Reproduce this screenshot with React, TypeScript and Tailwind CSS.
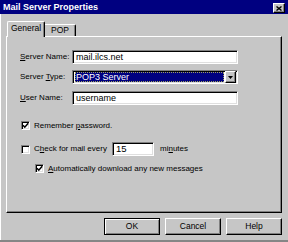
import React from "react";

const raised =
  "bg-[#c6c6c6] border-t border-l border-r border-b border-t-white border-l-white border-r-black border-b-black shadow-[inset_-1px_-1px_0_#808080]";
const sunken =
  "bg-white border-t border-l border-r border-b border-t-[#808080] border-l-[#808080] border-r-white border-b-white shadow-[inset_1px_1px_0_#000,inset_-1px_-1px_0_#dfdfdf]";

function Check({ checked }: { checked: boolean }) {
  return (
    <div className={`w-[9px] h-[9px] flex items-center justify-center shrink-0 ${sunken}`}>
      {checked && (
        <svg width="7" height="7" viewBox="0 0 7 7">
          <path d="M1 3.2 L2.8 5.2 L6.2 1.2" fill="none" stroke="#000" strokeWidth="1.5" />
        </svg>
      )}
    </div>
  );
}

function Field({ label, value }: { label: React.ReactNode; value: string }) {
  return (
    <div className="flex items-center h-[14px]">
      <span className="w-[52px]">{label}</span>
      <div className={`w-[166px] h-[14px] flex items-center pl-[3px] text-[9px] ${sunken}`}>{value}</div>
    </div>
  );
}

function Button({ label, isDefault }: { label: string; isDefault?: boolean }) {
  return (
    <button
      className={
        isDefault
          ? "w-[56px] h-[17px] bg-[#c6c6c6] border border-black shadow-[inset_1px_1px_0_#fff,inset_-1px_-1px_0_#808080] flex items-center justify-center text-[8.5px]"
          : `w-[56px] h-[17px] flex items-center justify-center text-[8.5px] ${raised}`
      }
    >
      {label}
    </button>
  );
}

export default function App() {
  return (
    <div className="w-[288px] h-[242px] bg-[#c6c6c6] flex flex-col text-[8px] leading-none text-black font-['Liberation_Sans',Arial,sans-serif] border-b-2 border-b-[#868686] overflow-hidden">
      <div className="h-[14px] bg-[#000080] flex items-center justify-between pl-[3px] pr-[3px] shrink-0">
        <span className="text-white font-bold text-[9px]">Mail Server Properties</span>
        <div className={`w-[12px] h-[10px] flex items-center justify-center mt-[2px] ${raised}`}>
          <svg width="6" height="5" viewBox="0 0 6 5">
            <path d="M0.5 0.5 L5.5 4.5 M5.5 0.5 L0.5 4.5" stroke="#000" strokeWidth="1.4" />
          </svg>
        </div>
      </div>

      <div className="flex-1 flex flex-col border-l border-l-white">
        <div className="flex items-end pl-[6px] pt-[7px] -mb-px relative z-10 text-[8.5px]">
          <div className="h-[16px] w-[38px] bg-[#c6c6c6] border-t border-l border-t-white border-l-white border-r border-r-black shadow-[inset_-1px_0_0_#808080] rounded-t-[2px] flex items-center justify-center pb-[2px]">
            General
          </div>
          <div className="h-[12px] w-[31px] mb-px bg-[#c6c6c6] border-t border-t-white border-r border-r-black shadow-[inset_-1px_0_0_#808080] rounded-tr-[2px] flex items-center justify-center">
            POP
          </div>
        </div>

        <div className="ml-[5px] w-[276px] h-[177px] border-t border-l border-t-white border-l-white border-r border-b border-r-black border-b-black shadow-[inset_-1px_-1px_0_#808080] flex flex-col pt-[13px] pl-[13px]">
          <Field label={<><u>S</u>erver Name:</>} value="mail.ilcs.net" />

          <div className="flex items-center h-[14px] mt-[6px]">
            <span className="w-[52px]">Server <u>T</u>ype:</span>
            <div className={`w-[166px] h-[14px] flex items-center pl-[2px] pr-px ${sunken}`}>
              <div className="flex-1 h-[10px] bg-[#000080] text-white text-[9px] flex items-center pl-px mr-px outline outline-1 outline-dotted outline-[#a0a060] -outline-offset-1">
                POP3 Server
              </div>
              <div className={`w-[11px] h-[12px] flex items-center justify-center ${raised}`}>
                <svg width="5" height="3" viewBox="0 0 5 3">
                  <path d="M0 0 H5 L2.5 3 Z" fill="#000" />
                </svg>
              </div>
            </div>
          </div>

          <div className="mt-[7px]">
            <Field label={<><u>U</u>ser Name:</>} value="username" />
          </div>

          <div className="flex items-center h-[9px] mt-[16px] pl-px">
            <Check checked />
            <span className="ml-[4px]">
              Remember <u>p</u>assword.
            </span>
          </div>

          <div className="flex items-center h-[14px] mt-[12px] pl-px">
            <Check checked={false} />
            <span className="ml-[4px] w-[78px]">
              C<u>h</u>eck for mail every
            </span>
            <div className={`w-[42px] h-[14px] flex items-center pl-[3px] text-[9.5px] ${sunken}`}>15</div>
            <span className="ml-[6px]">
              mi<u>n</u>utes
            </span>
          </div>

          <div className="flex items-center h-[9px] mt-[8px] pl-[15px]">
            <Check checked />
            <span className="ml-[4px]">
              <u>A</u>utomatically download any new messages
            </span>
          </div>
        </div>

        <div className="flex justify-end gap-[5px] pr-[6px] mt-[5px]">
          <Button label="OK" isDefault />
          <Button label="Cancel" />
          <Button label="Help" />
        </div>
      </div>
    </div>
  );
}
